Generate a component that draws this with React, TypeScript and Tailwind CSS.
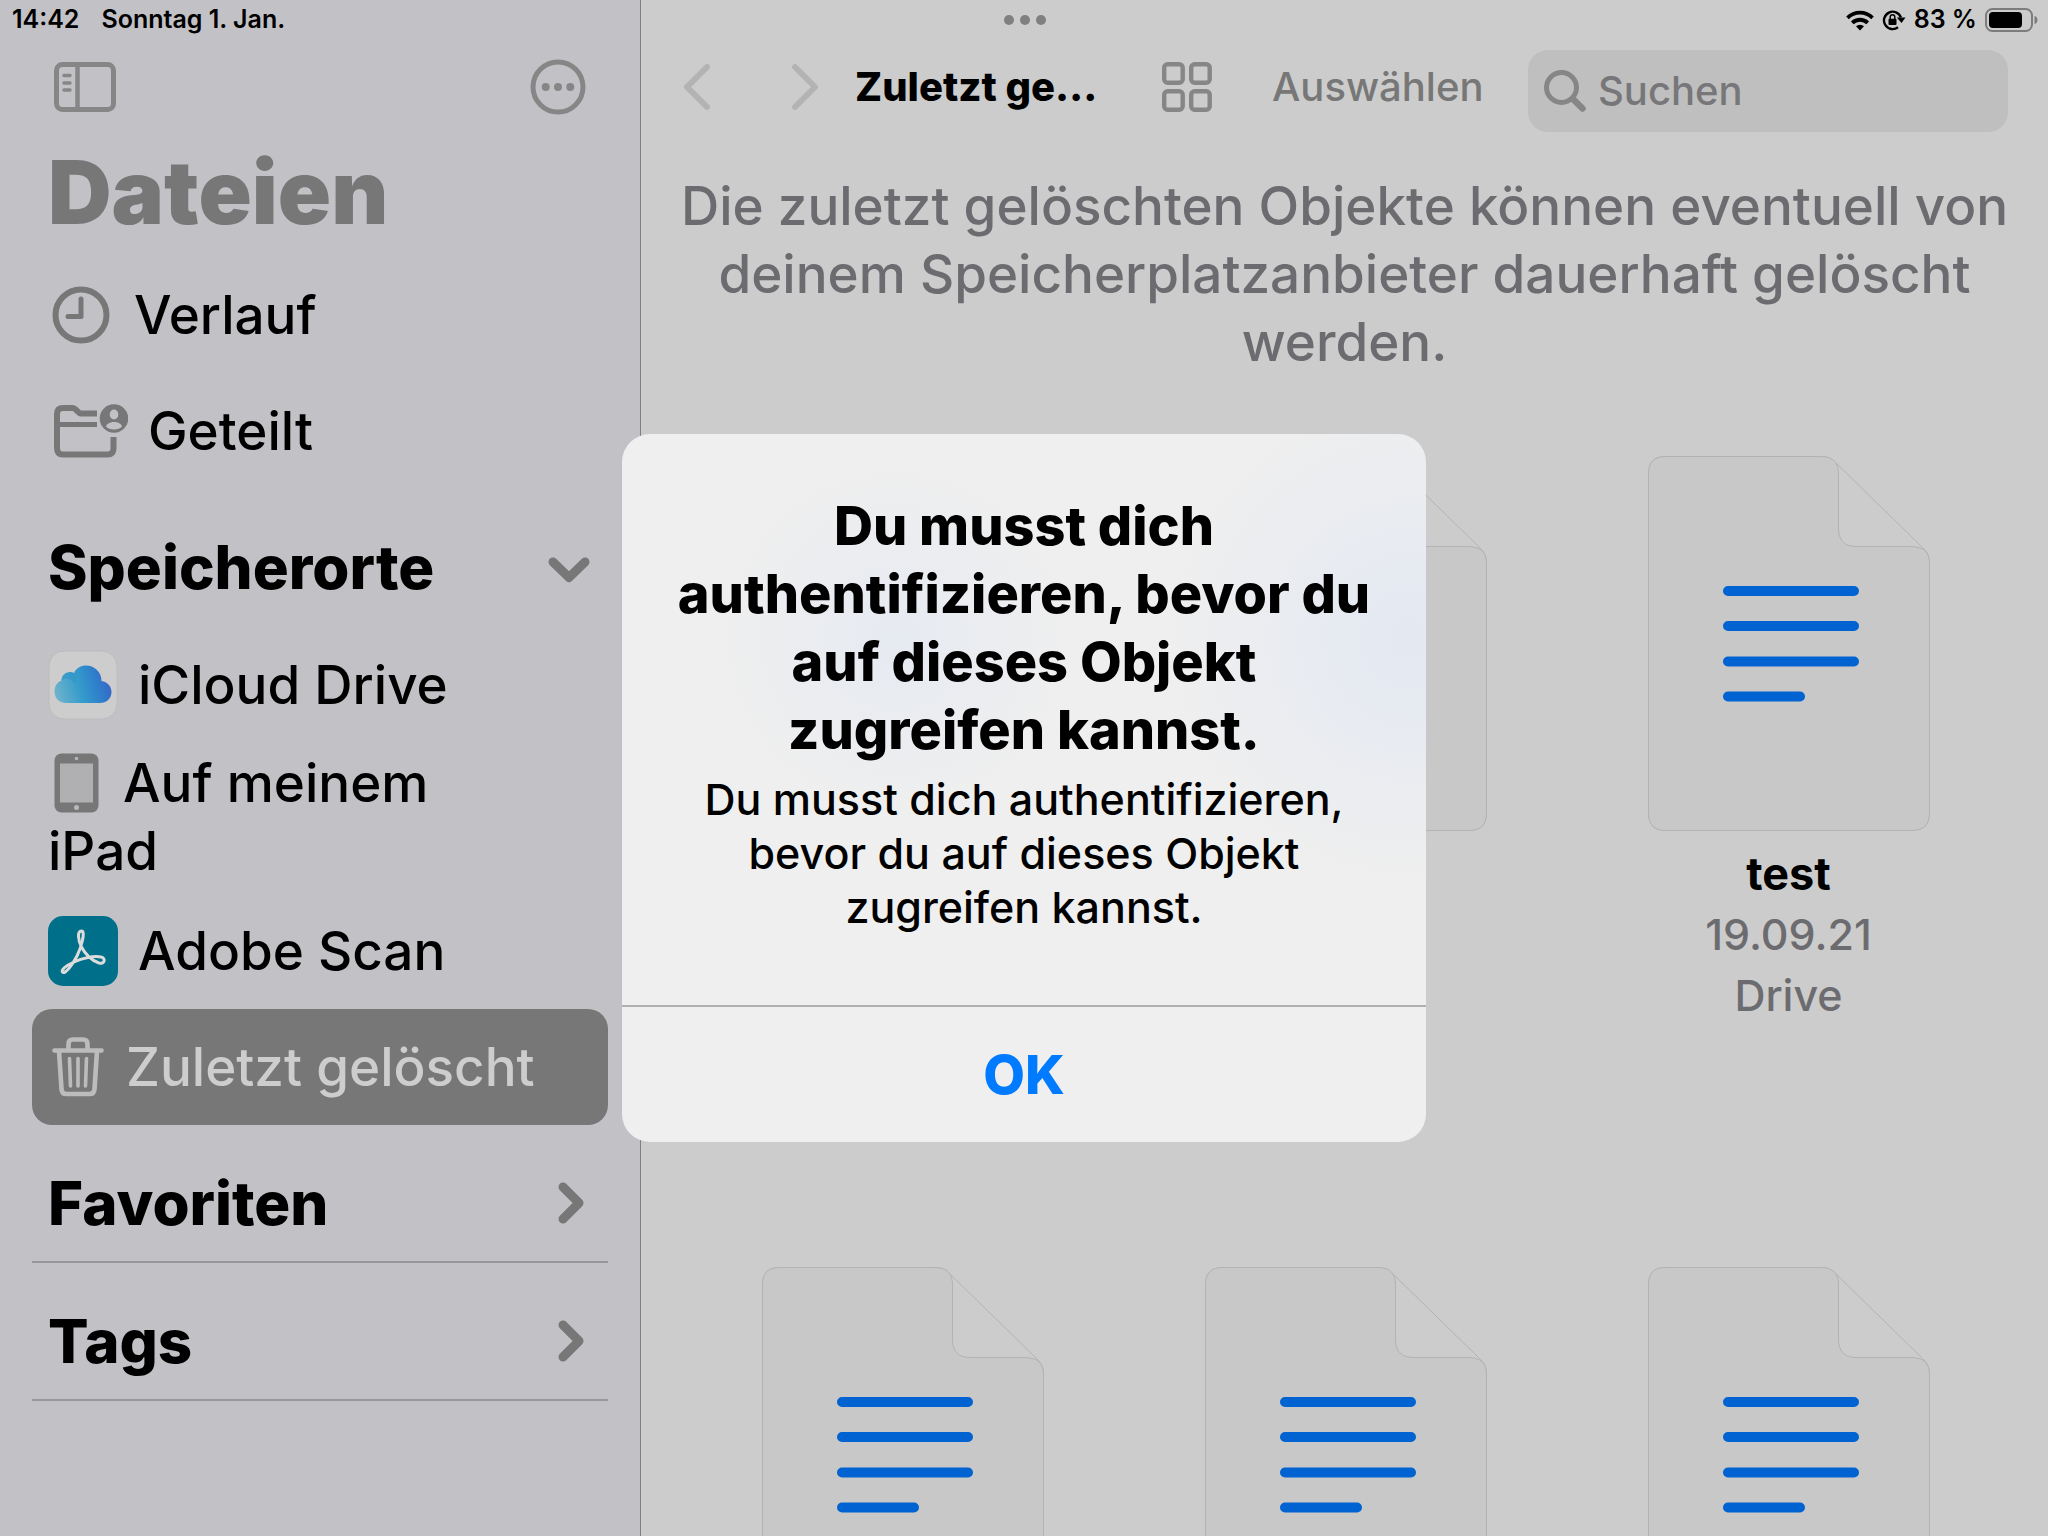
import type { ReactNode } from 'react';

type FileEntry = { id: number; name?: string; date?: string; place?: string };

const files: FileEntry[] = [
  { id: 1 },
  { id: 2 },
  { id: 3, name: 'test', date: '19.09.21', place: 'Drive' },
  { id: 4 },
  { id: 5 },
  { id: 6 },
];

function SidebarIcon() {
  return (
    <svg width="62" height="50" viewBox="0 0 62 50" fill="none" stroke="currentColor">
      <rect x="2.5" y="2.5" width="57" height="45" rx="6" strokeWidth="5" />
      <path d="M23.5 3v44" strokeWidth="4.5" />
      <path d="M10 13.5h6M10 21h6M10 28h6" strokeWidth="3.4" strokeLinecap="round" />
    </svg>
  );
}

function MoreIcon() {
  return (
    <svg width="56" height="56" viewBox="0 0 56 56" fill="currentColor">
      <circle cx="28" cy="28" r="25" fill="none" stroke="currentColor" strokeWidth="5" />
      <circle cx="15.7" cy="28" r="4" />
      <circle cx="28" cy="28" r="4" />
      <circle cx="40.3" cy="28" r="4" />
    </svg>
  );
}

function ClockIcon() {
  return (
    <svg width="58" height="58" viewBox="0 0 58 58" fill="none" stroke="currentColor">
      <circle cx="29" cy="29" r="25.5" strokeWidth="6" />
      <path d="M29 13v17.5H16" strokeWidth="5" strokeLinecap="round" strokeLinejoin="round" />
    </svg>
  );
}

function SharedFolderIcon() {
  return (
    <svg width="74" height="54" viewBox="0 0 74 54" fill="none" stroke="currentColor" strokeWidth="6">
      <path d="M43 9.5H26.5C24 9.5 22 4 18.5 4H9C5 4 3 6 3 10V44C3 48.5 5 50.5 9 50.5H53.5C57.5 50.5 59.5 48.5 59.5 44.5V33" />
      <path d="M5 20.5H43" strokeWidth="5" />
      <circle cx="60" cy="14.5" r="14.3" fill="currentColor" stroke="none" />
      <ellipse cx="60" cy="10.5" rx="4.3" ry="5" fill="#c2c1c6" stroke="none" />
      <path d="M52 22.5C53.5 16.5 66.5 16.5 68 22.5C65 26.5 55 26.5 52 22.5Z" fill="#c2c1c6" stroke="none" />
    </svg>
  );
}

function CloudIcon() {
  return (
    <svg width="70" height="70" viewBox="0 0 70 70">
      <defs>
        <linearGradient id="cloud" x1="0" y1="0.7" x2="1" y2="0.5">
          <stop offset="0" stopColor="#6fb3cc" />
          <stop offset="0.45" stopColor="#349bcb" />
          <stop offset="0.75" stopColor="#2f7fcb" />
          <stop offset="1" stopColor="#3765c4" />
        </linearGradient>
      </defs>
      <rect x="1" y="1" width="68" height="68" rx="15" fill="#cdcdcd" stroke="#bcbcbe" />
      <path
        d="M18 53C11 53 6.5 48 6.5 41.5C6.5 36 9.5 32 13.5 30.5C13.5 25.5 17.5 22 22 22C23.5 22 25 22.5 26 23C28 18 33 15.5 38 15.5C46 15.5 53.5 21.5 53.5 31C59.5 32 63.5 36.5 63.5 42C63.5 48.5 58.5 53 52 53Z"
        fill="url(#cloud)"
      />
      <path d="M13.5 30.5C17 27.5 24 28 27 34C29 31 28.5 26 26 23C20.5 20.5 13.5 24 13.5 30.5Z" fill="#2c93c4" opacity="0.5" />
    </svg>
  );
}

function TabletIcon() {
  return (
    <svg className="inline align-[-11px]" width="45" height="60" viewBox="0 0 45 60">
      <rect x="0.5" y="0.5" width="44" height="59" rx="7" fill="#777777" />
      <rect x="6" y="10.5" width="33" height="39" fill="#b0b0b3" />
      <circle cx="22.5" cy="5.5" r="1.7" fill="#b9b9bc" />
      <circle cx="22.5" cy="54.5" r="2.5" fill="#b9b9bc" />
    </svg>
  );
}

function AdobeIcon() {
  return (
    <svg width="70" height="70" viewBox="0 0 70 70">
      <rect width="70" height="70" rx="15" fill="#00708a" />
      <path
        d="M33.5 15C29 15 30 24 33.5 31C37 38 44 45 51 47C57 48.5 58 42 53 41C46 39.5 34 42 26 46C17 50 13 54 14.5 56C17 59 25 48 29 40C33 32 38 15 33.5 15Z"
        fill="none"
        stroke="#dcdcdc"
        strokeWidth="3"
      />
    </svg>
  );
}

function TrashIcon() {
  return (
    <svg width="52" height="60" viewBox="0 0 52 60" fill="none" stroke="currentColor" strokeLinecap="round" strokeLinejoin="round">
      <path d="M2.5 13.5H49.5M16.5 12V7C16.5 4 18 2.5 21 2.5H31C34 2.5 35.5 4 35.5 7V12" strokeWidth="4.6" />
      <path d="M7 14L9.5 52C9.7 55.5 11.5 57 14.5 57H37.5C40.5 57 42.3 55.5 42.5 52L45 14" strokeWidth="4.6" />
      <path d="M17.5 21.5L18.5 49M26 21.5V49M34.5 21.5L33.5 49" strokeWidth="3.6" />
    </svg>
  );
}

function Chevron({ d, w, h, stroke }: { d: string; w: number; h: number; stroke: number }) {
  return (
    <svg width={w} height={h} viewBox={`0 0 ${w} ${h}`} fill="none" stroke="currentColor" strokeWidth={stroke} strokeLinecap="round" strokeLinejoin="round">
      <path d={d} />
    </svg>
  );
}

function GridIcon() {
  return (
    <svg width="50" height="50" viewBox="0 0 50 50" fill="none" stroke="currentColor" strokeWidth="4.4">
      <rect x="2.2" y="2.2" width="18.5" height="18.5" rx="3.5" />
      <rect x="29.2" y="2.2" width="18.5" height="18.5" rx="3.5" />
      <rect x="2.2" y="29.2" width="18.5" height="18.5" rx="3.5" />
      <rect x="29.2" y="29.2" width="18.5" height="18.5" rx="3.5" />
    </svg>
  );
}

function DocumentIcon() {
  return (
    <svg width="282" height="375" viewBox="0 0 282 375" fill="none" stroke="#b3b3b3">
      <path
        d="M18 .5H172C180 .5 183 2 188 7L274 91C279 96 281.5 99 281.5 108V356C281.5 369 276 374.5 263 374.5H18C6 374.5 .5 369 .5 356V18C.5 6 6 .5 18 .5Z"
        fill="#cccccc"
      />
      <path
        d="M18 .5H172C185 .5 190.5 6 190.5 18V72C190.5 84 196 90.5 208 90.5H262C276 90.5 281.5 96 281.5 108V356C281.5 369 276 374.5 263 374.5H18C6 374.5 .5 369 .5 356V18C.5 6 6 .5 18 .5Z"
        fill="#c8c8c8"
      />
      <path d="M80 135H206M80 170H206M80 205.5H206M80 240.5H152" stroke="#0063d1" strokeWidth="10" strokeLinecap="round" />
    </svg>
  );
}

function StatusIcons() {
  return (
    <div className="flex items-center gap-2 font-semibold">
      <svg width="28" height="21" viewBox="0 0 28 21" fill="none" stroke="#000" strokeWidth="3.8">
        <path d="M1.5 7.8A17.7 17.7 0 0 1 26.5 7.8" />
        <path d="M6.3 12.9A11 11 0 0 1 21.7 12.9" />
        <path d="M10 16.3A5.8 5.8 0 0 1 18 16.3L14 20.5Z" fill="#000" stroke="none" />
      </svg>
      <svg width="24" height="22" viewBox="0 0 24 22" fill="none" stroke="#000">
        <path d="M16 18.3A8.7 8.7 0 1 1 18.9 8.5" strokeWidth="2.4" />
        <path d="M14.8 8.5H23.5L19.5 14Z" fill="#000" stroke="none" />
        <rect x="6.5" y="9.8" width="8" height="6.2" rx="1" fill="#000" stroke="none" />
        <path d="M8.2 10V8A2.3 2.3 0 0 1 12.8 8V10" strokeWidth="1.5" />
      </svg>
      <span>83 %</span>
      <svg width="53" height="24" viewBox="0 0 53 24">
        <rect x="1" y="1" width="46" height="22" rx="6.5" fill="none" stroke="#7c7c7c" strokeWidth="2" />
        <rect x="4" y="4" width="33" height="16" rx="4" fill="#000" />
        <path d="M49.5 8C53.5 9 53.5 15 49.5 16Z" fill="#7c7c7c" />
      </svg>
    </div>
  );
}

function SidebarItem({ icon, label, gap }: { icon: ReactNode; label: string; gap: string }) {
  return (
    <a href="#" className={`flex h-[116px] items-center ${gap}`}>
      <span className="text-[#777777]">{icon}</span>
      {label}
    </a>
  );
}

function SidebarSection({ label, open }: { label: string; open?: boolean }) {
  return (
    <button
      type="button"
      className={`flex h-[138px] w-full items-center justify-between border-b-2 pt-5 pl-4 text-left text-[60px] leading-[72px] font-extrabold ${open ? 'border-transparent pr-[18px]' : 'border-[#98979c] pr-6'}`}
    >
      {label}
      <span className="text-[#777777]">
        {open ? <Chevron w={42} h={34} d="M5 12L21 27.5L37 12" stroke={9} /> : <Chevron w={26} h={42} d="M5 5L21 21L5 37" stroke={9} />}
      </span>
    </button>
  );
}

function Sidebar() {
  return (
    <aside className="w-[641px] shrink-0 border-r border-[#808080] bg-[#c2c1c6] px-8">
      <div className="mt-[42px] flex h-[90px] items-center justify-between px-[22px] text-[#868686]">
        <button type="button" aria-label="Seitenleiste">
          <SidebarIcon />
        </button>
        <button type="button" aria-label="Mehr">
          <MoreIcon />
        </button>
      </div>
      <h1 className="mt-2 h-[117px] px-4 text-[88px] leading-[104px] font-black text-[#777777]">Dateien</h1>
      <nav className="text-[53px] leading-[68px] font-medium">
        <SidebarItem icon={<ClockIcon />} label="Verlauf" gap="gap-6 pl-5" />
        <SidebarItem icon={<SharedFolderIcon />} label="Geteilt" gap="gap-5 pl-[22px]" />
        <SidebarSection label="Speicherorte" open />
        <SidebarItem icon={<CloudIcon />} label="iCloud Drive" gap="gap-5 pl-4" />
        <a href="#" className="block h-[150px] pt-[6px] pr-24 pl-4">
          <span className="mr-6 ml-[6px]">
            <TabletIcon />
          </span>
          Auf meinem iPad
        </a>
        <SidebarItem icon={<AdobeIcon />} label="Adobe Scan" gap="gap-5 pl-4" />
        <a href="#" aria-current="page" className="flex h-[116px] items-center gap-[22px] rounded-[20px] bg-[#777777] pl-5 text-[#cdcdcd]">
          <span className="text-[#bcbcbc]">
            <TrashIcon />
          </span>
          Zuletzt gelöscht
        </a>
        <SidebarSection label="Favoriten" />
        <SidebarSection label="Tags" />
      </nav>
    </aside>
  );
}

function Toolbar() {
  return (
    <header className="mt-[42px] flex h-[90px] items-center pr-10 pl-[42px] text-[40px] leading-[50px]">
      <button type="button" aria-label="Zurück" className="text-[#b3b3b3]">
        <Chevron w={28} h={48} d="M24 4L4 24L24 44" stroke={6} />
      </button>
      <button type="button" aria-label="Vor" className="ml-20 text-[#b3b3b3]">
        <Chevron w={28} h={48} d="M4 4L24 24L4 44" stroke={6} />
      </button>
      <h2 className="ml-9 w-[307px] font-extrabold">Zuletzt ge…</h2>
      <button type="button" aria-label="Darstellung" className="text-[#868686]">
        <GridIcon />
      </button>
      <button type="button" className="ml-[60px] font-medium text-[#777777]">
        Auswählen
      </button>
      <label className="ml-auto flex h-[82px] w-[480px] items-center gap-3 self-end rounded-[20px] bg-[#bfbfbf] px-4">
        <svg className="shrink-0" width="42" height="42" viewBox="0 0 42 42" fill="none" stroke="#868686" strokeLinecap="round">
          <circle cx="17.5" cy="17.5" r="15" strokeWidth="5" />
          <path d="M29 29L38.5 38.5" strokeWidth="6.5" />
        </svg>
        <input
          type="search"
          aria-label="Suchen"
          placeholder="Suchen"
          className="w-full min-w-0 bg-transparent font-medium outline-none placeholder:text-[#777779] placeholder:opacity-100"
        />
      </label>
    </header>
  );
}

export default function App() {
  return (
    <div className="relative flex h-screen overflow-hidden bg-[#cccccc] font-['Inter','Liberation_Sans',sans-serif] text-black">
      <Sidebar />
      <main className="min-w-0 flex-1">
        <Toolbar />
        <p className="mt-10 px-8 text-center text-[53px] leading-[68px] font-medium text-[#6c6c70]">
          Die zuletzt gelöschten Objekte können eventuell von deinem Speicherplatzanbieter dauerhaft gelöscht werden.
        </p>
        <ul className="mt-20 grid grid-cols-3 pr-[38px] pl-10">
          {files.map((file) => (
            <li key={file.id} className="flex h-[811px] flex-col items-center text-[43px] leading-[61px]">
              <DocumentIcon />
              {file.name && (
                <>
                  <span className="mt-3 text-[45px] font-bold">{file.name}</span>
                  <span className="font-medium text-[#6c6c70]">{file.date}</span>
                  <span className="font-medium text-[#6c6c70]">{file.place}</span>
                </>
              )}
            </li>
          ))}
        </ul>
      </main>

      {/* Status bar, drawn across both panes */}
      <div className="absolute inset-x-0 top-0 grid h-10 grid-cols-3 items-center pr-[10px] pl-3 text-[25px]">
        <div className="flex gap-[22px] font-semibold">
          <span>14:42</span>
          <span>Sonntag 1. Jan.</span>
        </div>
        <div className="flex justify-center gap-[6px]">
          <span className="size-[10px] rounded-full bg-[#808080]" />
          <span className="size-[10px] rounded-full bg-[#808080]" />
          <span className="size-[10px] rounded-full bg-[#808080]" />
        </div>
        <div className="flex justify-end">
          <StatusIcons />
        </div>
      </div>

      {/* Alert */}
      <div className="absolute inset-x-0 top-10 bottom-0 flex items-center justify-center">
        <div
          role="alertdialog"
          aria-labelledby="alert-title"
          className="w-[804px] overflow-hidden rounded-[28px] bg-[#efefef] bg-[radial-gradient(circle_at_34%_29%,#e6eaf1_0%,transparent_24%),radial-gradient(circle_at_98%_29%,#e3e8f2_0%,transparent_26%)] text-center"
        >
          <div className="h-[571px] px-10 pt-[58px]">
            <h3 id="alert-title" className="text-[54px] leading-[68px] font-extrabold">
              Du musst dich authentifizieren, bevor du auf dieses Objekt zugreifen kannst.
            </h3>
            <p className="mt-2 text-[43px] leading-[54px] font-medium">
              Du musst dich authentifizieren, bevor du auf dieses Objekt zugreifen kannst.
            </p>
          </div>
          <button type="button" className="h-[137px] w-full border-t-2 border-[#b0b0b0] text-[54px] font-extrabold text-[#007aff]">
            OK
          </button>
        </div>
      </div>
    </div>
  );
}
